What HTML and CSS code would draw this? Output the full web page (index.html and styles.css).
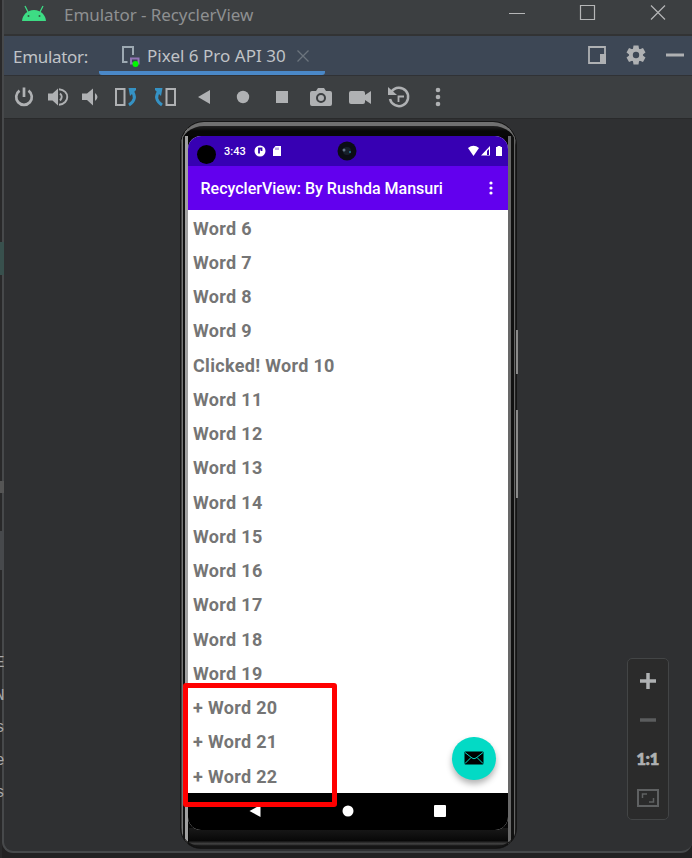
FILE: index.html
```html
<!DOCTYPE html>
<html lang="en">
<head>
<meta charset="utf-8">
<title>Emulator - RecyclerView</title>
<link rel="stylesheet" href="styles.css">
</head>
<body>
<aside class="behind">
  <i class="mark teal"></i><i class="mark grey"></i><i class="mark low"></i>
  <div class="code"><span>E</span><span>N</span><span>s</span><span>e</span><span>s</span></div>
</aside>
<main class="window">
  <header class="titlebar">
    <svg class="robot" width="26" height="18" viewBox="0 0 26 18"><path d="M1 17C1.500 11 6 6 13 6s11.500 5 12 11z" fill="#3ddc84"/><path d="M7 8L4 2M19 8l3-6" stroke="#3ddc84" stroke-width="1.300"/><circle cx="7.500" cy="12" r="1" fill="#315b43"/><circle cx="18.500" cy="12" r="1" fill="#315b43"/></svg>
    <h1>Emulator - RecyclerView</h1>
    <svg class="controls" width="160" height="20" viewBox="0 0 160 20" fill="none" stroke="#b5b6b7" stroke-width="1.200"><path d="M1 10.500h16M72.500 2.500h14v14h-14zM143 2.500l14 14M157 2.500l-14 14"/></svg>
  </header>
  <nav class="tabs">
    <span class="label">Emulator:</span>
    <div class="tab">
      <svg width="20" height="24" viewBox="0 0 20 24" fill="none"><path d="M6.500 18H2V3h10v8" stroke="#9da9b2" stroke-width="2"/><path d="M10 14.500h7.500v5H10z" stroke="#9275b5" stroke-width="2"/><circle cx="14.500" cy="20" r="3" fill="#00f900"/></svg>
      <span class="name">Pixel 6 Pro API 30</span>
      <svg class="close" width="12" height="12" viewBox="0 0 12 12"><path d="M.5.5l11 11M11.500.5l-11 11" stroke="#6c747d" stroke-width="1.300"/></svg>
    </div>
    <svg class="actions" width="98" height="22" viewBox="0 0 98 22"><path d="M1 3h16v16H1z" fill="none" stroke="#afb1b3" stroke-width="1.800"/><path d="M12 10h6v10h-6z" fill="#afb1b3"/><g transform="translate(48 11)" fill="#afb1b3"><circle r="7"/><path id="c" d="M-2.500-9.500h5L3.200-5h-6.400zM-2.500 9.500h5L3.200 5h-6.400z"/><use href="#c" transform="rotate(60)"/><use href="#c" transform="rotate(120)"/><circle r="3.200" fill="#3d4755"/></g><path d="M78 9.500h18v3H78z" fill="#afb1b3"/></svg>
  </nav>
  <nav class="toolbar">
    <svg viewBox="-12 -12 24 24"><path d="M-4.500-6.300A7.800 7.800 0 1 0 4.500-6.300M0-9.500V0" fill="none" stroke="#afb1b3" stroke-width="2.700"/></svg>
    <svg viewBox="-12 -12 24 24"><path d="M-10-3.500h4.500L0-8.500v17l-5.500-5H-10z" fill="#afb1b3"/><path d="M2-3.500q3.500 3 0 7M1-7.800c11 1 11 14.500 0 15.500" fill="none" stroke="#afb1b3" stroke-width="1.900"/></svg>
    <svg viewBox="-12 -12 24 24"><path d="M-8-3.500h5L3-8.500v17L-3 3h-5zM5-4q5 4 0 8z" fill="#afb1b3"/></svg>
    <svg viewBox="-12 -12 24 24"><path d="M-10-8H-1.500V8H-10z" fill="none" stroke="#afb1b3" stroke-width="2"/><path d="M3 8q9-6 3-14" fill="none" stroke="#3592c4" stroke-width="3"/><path d="M2.500-9H10v2L4-1z" fill="#3592c4"/></svg>
    <svg viewBox="-12 -12 24 24"><path d="M1.500-8H10V8H1.500z" fill="none" stroke="#afb1b3" stroke-width="2"/><path d="M-3 8q-9-6-3-14" fill="none" stroke="#3592c4" stroke-width="3"/><path d="M-2.500-9H-10v2l6 6z" fill="#3592c4"/></svg>
    <svg viewBox="-12 -12 24 24"><path d="M6-7V7L-6 0z" fill="#afb1b3"/></svg>
    <svg viewBox="-12 -12 24 24"><circle r="6.200" fill="#afb1b3"/></svg>
    <svg viewBox="-12 -12 24 24"><path d="M-6-6H6V6H-6z" fill="#afb1b3"/></svg>
    <svg viewBox="-12 -12 24 24"><path d="M-9-6h4l2-3h6l2 3h4q2 0 2 2V7q0 2-2 2H-9q-2 0-2-2v-11q0-2 2-2z" fill="#afb1b3"/><circle cy="1" r="4" fill="none" stroke="#3c3f41" stroke-width="2"/></svg>
    <svg viewBox="-12 -12 24 24"><path d="M-9-6H3q2 0 2 2v2l6-4V7L5 3v2q0 2-2 2H-9q-2 0-2-2v-9q0-2 2-2z" fill="#afb1b3"/></svg>
    <svg viewBox="-12 -12 24 24"><path d="M-7.500-5.500A9.200 9.200 0 1 1-9 2" fill="none" stroke="#afb1b3" stroke-width="2.500"/><path d="M-.5 5v-5.500h5.500" fill="none" stroke="#afb1b3" stroke-width="1.800"/><path d="M-11-10v8h9z" fill="#afb1b3"/></svg>
    <svg viewBox="-12 -12 24 24" fill="#afb1b3"><circle cy="-7" r="2.300"/><circle r="2.300"/><circle cy="7" r="2.300"/></svg>
  </nav>
  <section class="canvas">
    <div class="phone">
      <i class="key power"></i><i class="key volume"></i>
      <div class="screen">
        <div class="status">
          <i class="hole"></i><span class="time">3:43</span>
          <svg class="notes" width="30" height="12" viewBox="0 0 30 12"><circle cx="6" cy="6" r="5.500" fill="#fff"/><path d="M5 8.500V3.500h2.500v2.500" stroke="#3700b3" stroke-width="1.800" fill="none"/><path d="M21.500 1H27v10h-8V4z" fill="#fff"/><path d="M22 2.500V5m2-2.500V5" stroke="#3700b3" stroke-width=".7"/></svg>
          <svg class="camera" width="20" height="20" viewBox="-10 -10 20 20"><circle r="9.500" fill="#0b0d15"/><circle r="4" fill="#17202a"/><circle cx="-3" cy="-1" r="1.500" fill="#627388"/><circle cx="3" cy="1" r="1" fill="#237894"/></svg>
          <svg class="signals" width="36" height="12" viewBox="0 0 36 12"><path d="M0 3q5.500-4.500 11 0L5.500 11z" fill="#fff"/><path d="M13 10.500L22 1v9.500z" fill="#fff"/><path d="M19 6v4h2V4z" fill="#3700b3"/><path d="M28 2h1.500V1h3v1H34v9h-6z" fill="#fff"/></svg>
        </div>
        <div class="appbar"><h2>RecyclerView: By Rushda Mansuri</h2>
          <svg width="4" height="14" viewBox="0 0 4 14" fill="#fff"><circle cx="2" cy="2" r="1.600"/><circle cx="2" cy="7" r="1.600"/><circle cx="2" cy="12" r="1.600"/></svg></div>
        <ul class="words">
          <li>Word 6</li><li>Word 7</li><li>Word 8</li><li>Word 9</li><li>Clicked! Word 10</li><li>Word 11</li><li>Word 12</li><li>Word 13</li><li>Word 14</li><li>Word 15</li><li>Word 16</li><li>Word 17</li><li>Word 18</li><li>Word 19</li><li>+ Word 20</li><li>+ Word 21</li><li>+ Word 22</li>
        </ul>
        <div class="navbar">
          <svg viewBox="-6 -6 12 12"><path d="M5.500-6V6l-11-6z"/></svg><svg viewBox="-6 -6 12 12"><circle r="5.500"/></svg><svg viewBox="-6 -6 12 12"><rect x="-6" y="-6" width="12" height="12" rx="1"/></svg>
        </div>
        <div class="fab"><svg width="20" height="14" viewBox="0 0 20 14"><rect x=".5" y=".5" width="19" height="13" rx="1"/><path d="M1 1.500l7 5.500q2 1.500 4 0l7-5.500M1 12.500L7 6.500M19 12.500l-6-6" fill="none" stroke="#03dac5"/></svg></div>
      </div>
      <div class="highlight"></div>
    </div>
    <div class="zoom">
      <svg viewBox="-12 -12 24 24"><path d="M-8 0H8M0-8V8" stroke="#afb1b3" stroke-width="3.500"/></svg>
      <svg viewBox="-12 -12 24 24"><path d="M-8 0H8" stroke="#5b5d5e" stroke-width="3.500"/></svg>
      <b>1:1</b>
      <svg viewBox="-12 -12 24 24"><path d="M-10-8H10V8H-10z" stroke="#5f6162" stroke-width="2" fill="none"/><path d="M-5.500 0v-4H-1M5.500 0v4H1" stroke="#5f6162" stroke-width="1.500" fill="none"/></svg>
    </div>
  </section>
</main>
</body>
</html>
```
FILE: styles.css
```css
* { box-sizing: border-box; }
body { margin: 0; width: 692px; height: 858px; overflow: hidden; display: flex; position: relative; background: #222122; font-family: "Noto Sans", sans-serif; }
svg { display: block; flex: none; }
h1, h2 { margin: 0; font-weight: 400; }
.behind { width: 2px; height: 858px; background: #29292a; flex: none; }
.mark { position: absolute; left: 0; width: 4px; z-index: 2; }
.teal { top: 242px; height: 33px; background: #38504d; }
.grey { top: 481px; height: 12px; background: #555; }
.low { top: 531px; height: 39px; background: #47494c; }
.code { position: absolute; left: 0; top: 647px; width: 4px; overflow: hidden; z-index: 2; color: #a6a7a9; font: 16px/32.500px "Liberation Mono", monospace; }
.code span { display: block; margin-left: -5px; }
.window { width: 690px; height: 853px; background: #2f3032; border: solid #47494b; border-width: 0 0 2px 2px; border-radius: 0 0 11px 11px; overflow: hidden; }
.titlebar { height: 36px; background: #3c3f41; border-bottom: 2px solid #323334; display: flex; padding-left: 17px; }
.robot { margin-top: 4px; }
.titlebar h1 { margin-left: 17px; font-size: 17px; line-height: 30px; color: #8e9091; width: 190px; white-space: nowrap; letter-spacing: -.07px; }
.controls { margin: 3px 24px 0 auto; }
.tabs { height: 40px; background: #3d4755; border-bottom: 1px solid #303235; display: flex; color: #c0c3c7; font-size: 17px; line-height: 41px; white-space: nowrap; }
.label { width: 95px; padding-left: 9px; letter-spacing: -.3px; }
.tab { width: 226px; height: 39px; display: flex; align-items: center; padding-left: 22px; background: linear-gradient(#4a88c7, #4a88c7) 0 100% / 100% 4px no-repeat; border-radius: 0 0 3px 3px; }
.name { width: 144px; margin-left: 6px; letter-spacing: .02px; }
.close { margin-left: 6px; }
.actions { margin: 8px 6px 0 auto; }
.toolbar { height: 43px; background: #3c3f41; border-bottom: 1px solid #292a2b; display: grid; grid-template-columns: 40px 28px 35px 38.500px repeat(8, 39px); place-items: center; }
.toolbar svg { width: 24px; height: 24px; }
.canvas { height: 732px; display: flex; padding-left: 176px; }
.phone { position: relative; width: 337px; height: 728px; margin-top: 2px; padding: 14px 8px 0 7px; border: 1px solid #161616; border-radius: 24px 24px 21px 21px; background: linear-gradient(90deg, #444 0 1px, #777 1px 2px, #111 2px 4px, #a0a0a0 4px 7px, #050505 7px calc(100% - 8px), #686868 calc(100% - 8px) calc(100% - 5px), #111 calc(100% - 5px) calc(100% - 2px), #666 calc(100% - 2px) calc(100% - 1px), #222 calc(100% - 1px)); }
.phone::before, .phone::after { content: ""; position: absolute; left: 0; right: 0; }
.phone::before { top: 0; height: 30px; border-top: 4px solid #707070; border-radius: 23px 23px 0 0; background: linear-gradient(#222, #080808 5px 10px, transparent 10px); }
.phone::after { bottom: 0; height: 34px; border-bottom: 2px solid #151515; border-radius: 0 0 20px 20px; background: linear-gradient(#191919, #080808 70%, #444 88%, #111) 8px 100% / calc(100% - 16px) 18px no-repeat; }
.key { position: absolute; right: -2px; width: 2px; background: #8a8a8a; }
.power { top: 208px; height: 44px; }
.volume { top: 288px; height: 88px; }
.screen { position: relative; z-index: 1; width: 320px; height: 694px; overflow: hidden; border-radius: 13px; background: #fff; font-family: Roboto, sans-serif; }
.status { height: 30px; background: #3700b3; display: flex; align-items: center; color: #fff; }
.hole { width: 19px; height: 19px; border-radius: 50%; background: #000; margin: 7px 0 0 9px; }
.time { width: 22px; margin-left: 8px; font-size: 11px; font-weight: 500; }
.notes { margin-left: 8px; }
.camera { margin-left: 53px; }
.signals { margin-left: auto; margin-right: 4px; }
.appbar { height: 44px; background: #6200ee; display: flex; align-items: center; justify-content: space-between; padding: 0 15px 0 12.500px; color: #fff; }
.appbar h2 { font-size: 16px; font-weight: 500; line-height: 45px; white-space: nowrap; }
.words { height: 583px; margin: 0; padding: 1.500px 0 0 5px; list-style: none; color: #757575; font-size: 18px; font-weight: 700; line-height: 34.250px; letter-spacing: .32px; white-space: nowrap; }
.words li { height: 34.250px; }
.navbar { height: 37px; background: #000; display: flex; justify-content: space-between; align-items: center; padding: 0 62px 1px 61px; fill: #fff; }
.navbar svg { width: 12px; height: 12px; }
.fab { position: absolute; left: 264px; top: 600.500px; width: 43.500px; height: 43.500px; border-radius: 50%; background: #03dac5; display: grid; place-items: center; box-shadow: 0 4px 6px rgba(0,0,0,.3); }
.highlight { position: absolute; z-index: 2; left: 2px; top: 561px; width: 154px; height: 124px; border: 5px solid #f00; border-radius: 3px; }
.zoom { width: 42px; height: 162px; margin: 539px 0 0 109.500px; background: #2b2b2b; border: 1px solid #434546; border-radius: 5px; display: grid; grid-template-rows: repeat(4, 39px); align-content: center; place-items: center; color: #afb1b3; }
.zoom svg { width: 24px; height: 24px; }
.zoom b { font: 900 17px/20px Lato, sans-serif; letter-spacing: -.5px; -webkit-text-stroke: .6px #afb1b3; }
```
